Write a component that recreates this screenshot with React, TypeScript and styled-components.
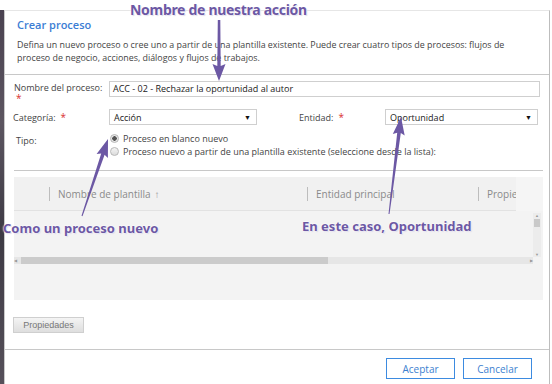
import React from "react";
import styled, { createGlobalStyle } from "styled-components";

const GlobalStyle = createGlobalStyle`
  html, body { margin: 0; padding: 0; background: #fff; }
  body { font-family: "Open Sans", "Noto Sans", sans-serif; }
  * { box-sizing: border-box; }
`;

const Page = styled.div`
  position: relative;
  width: 552px;
  height: 384px;
  padding-top: 10px;
  display: flex;
  overflow: hidden;
  background: #fff;
`;

const LeftStrip = styled.div`
  width: 4px;
  background: linear-gradient(180deg, #4a4250 0%, #5c5560 30%, #3d3a44 60%, #56505a 100%);
`;

const Dialog = styled.div`
  width: 546px;
  display: flex;
  flex-direction: column;
  border-left: 1px solid #c9c9c9;
  border-right: 1px solid #bdbdbd;
  border-top: 1px solid #e6e6e6;
  background: #fff;
  color: #444;
  font-size: 9px;
`;

const Header = styled.div`
  height: 64px;
  padding: 6px 12px 0 12px;
  border-bottom: 1px solid #c8c8c8;
`;

const Title = styled.div`
  color: #3b7dd4;
  font-size: 11px;
  font-weight: 600;
  line-height: 16px;
`;

const Desc = styled.div`
  margin-top: 5px;
  font-size: 8.9px;
  line-height: 13px;
  color: #444;
`;

const Body = styled.div`
  flex: 1;
  display: flex;
  flex-direction: column;
  padding: 6px 7px 0 8px;
  border-bottom: 1px solid #c8c8c8;
`;

const Row = styled.div<{ $h: number; $mt?: number }>`
  display: flex;
  align-items: flex-start;
  height: ${(p) => p.$h}px;
  margin-top: ${(p) => p.$mt ?? 0}px;
`;

const Label = styled.div<{ $w: number; $pl?: number; $pt?: number }>`
  width: ${(p) => p.$w}px;
  padding-left: ${(p) => p.$pl ?? 0}px;
  padding-top: ${(p) => p.$pt ?? 0}px;
  font-size: 9px;
  line-height: 11px;
  color: #444;
`;

const Req = styled.span`
  color: #d9302f;
  font-size: 10px;
  margin-left: 5px;
`;

const ReqBelow = styled.div`
  color: #d9302f;
  font-size: 10px;
  line-height: 8px;
  height: 8px;
  margin-top: 1px;
  padding-left: 2px;
`;

const TextInput = styled.div`
  width: 431px;
  height: 16px;
  border: 1px solid #cfcfcf;
  padding-left: 3px;
  font-size: 9px;
  line-height: 14px;
  color: #222;
`;

const Select = styled.div<{ $w: number }>`
  width: ${(p) => p.$w}px;
  height: 16px;
  border: 1px solid #cfcfcf;
  padding: 0 5px 0 4px;
  display: flex;
  align-items: center;
  justify-content: space-between;
  font-size: 9px;
  color: #222;
`;

const Caret = styled.span`
  font-size: 7px;
  color: #111;
`;

const RadioGroup = styled.div`
  display: flex;
  flex-direction: column;
  gap: 1px;
  padding-top: 3px;
`;

const RadioItem = styled.div`
  display: flex;
  align-items: center;
  gap: 4px;
  height: 12px;
  font-size: 9px;
  color: #444;
`;

const RadioDot = styled.span<{ $on?: boolean }>`
  width: 9px;
  height: 9px;
  border-radius: 50%;
  border: 1px solid #b8b8b8;
  background: ${(p) => (p.$on ? "radial-gradient(circle, #555 0 2px, #e8e8e8 2.5px)" : "linear-gradient(#f4f4f4,#dcdcdc)")};
`;

const Divider = styled.div`
  height: 1px;
  background: #c8c8c8;
  margin: 0 0 0 1px;
  width: 529px;
`;

const Grid = styled.div`
  margin: 6px 0 0 1px;
  width: 529px;
  height: 123px;
  background: #f3f3f3;
  display: flex;
  flex-direction: column;
`;

const GridHead = styled.div`
  height: 34px;
  display: flex;
  align-items: center;
  border-bottom: 1px solid #e2e2e2;
  background: #f1f1f1;
`;

const HeadCell = styled.div<{ $w: number }>`
  width: ${(p) => p.$w}px;
  height: 34px;
  display: flex;
  align-items: center;
  color: #8a8a8a;
  font-size: 10px;
  overflow: hidden;
  white-space: nowrap;
`;

const Sep = styled.span`
  width: 1px;
  height: 14px;
  background: #bdbdbd;
  margin-right: 8px;
  flex: none;
`;

const SortArrow = styled.span`
  margin-left: 4px;
  font-size: 10px;
  font-weight: 700;
  color: #999;
`;

const HeadTail = styled.div`
  flex: 1;
  height: 34px;
  background: #f5f5f5;
`;

const GridBody = styled.div`
  height: 53px;
  display: flex;
  flex-direction: column;
`;

const GridMain = styled.div`
  flex: 1;
  display: flex;
  justify-content: flex-end;
`;

const VScroll = styled.div`
  width: 8px;
  margin-right: 2px;
  margin-top: 2px;
  display: flex;
  flex-direction: column;
  align-items: center;
  background: #ececec;
  color: #999;
  font-size: 4px;
`;

const VThumb = styled.div`
  width: 6px;
  height: 8px;
  background: #c9c9c9;
  margin-top: 1px;
`;

const Filler = styled.span`
  flex: 1;
`;

const HScroll = styled.div`
  height: 7px;
  display: flex;
  align-items: center;
  background: #e6e6e6;
  margin-right: 10px;
  color: #999;
  font-size: 4px;
`;

const HThumb = styled.div`
  width: 307px;
  height: 7px;
  margin-left: 4px;
  background: #cbcbcb;
`;

const GreyButton = styled.div`
  margin: 17px 0 0 0;
  width: 71px;
  height: 16px;
  border: 1px solid #cfcfcf;
  background: linear-gradient(#f4f4f4, #dedede);
  color: #777;
  font-family: "Liberation Sans", Arial, sans-serif;
  font-size: 9px;
  display: flex;
  align-items: center;
  justify-content: center;
`;

const Footer = styled.div`
  height: 34px;
  display: flex;
  justify-content: flex-end;
  align-items: flex-start;
  gap: 8px;
  padding: 8px 17px 0 0;
`;

const BlueButton = styled.div`
  width: 69px;
  height: 21px;
  border: 1px solid #3d8be0;
  color: #3d7fd0;
  font-size: 10px;
  display: flex;
  align-items: center;
  justify-content: center;
`;

const Note = styled.div<{ $x: number; $y: number; $size: number; $ls?: number }>`
  position: absolute;
  left: ${(p) => p.$x}px;
  top: ${(p) => p.$y}px;
  font-family: "Noto Sans", "Open Sans", sans-serif;
  font-weight: 700;
  font-size: ${(p) => p.$size}px;
  letter-spacing: ${(p) => p.$ls ?? 0}px;
  line-height: 1;
  color: #6c58a4;
  white-space: nowrap;
  text-shadow: 0 0 2px #fff, 0 0 2px #fff, 1px 1px 1px #d8d3e6;
`;

const Overlay = styled.svg`
  position: absolute;
  left: 0;
  top: 0;
  pointer-events: none;
`;

function arrowPoints(x1: number, y1: number, x2: number, y2: number, tail = 1, shaft = 3.4, headW = 12, headL = 16) {
  const dx = x2 - x1;
  const dy = y2 - y1;
  const len = Math.hypot(dx, dy);
  const ux = dx / len;
  const uy = dy / len;
  const nx = -uy;
  const ny = ux;
  const bx = x2 - ux * headL;
  const by = y2 - uy * headL;
  const p = (x: number, y: number) => `${x.toFixed(1)},${y.toFixed(1)}`;
  return [
    p(x1 + (nx * tail) / 2, y1 + (ny * tail) / 2),
    p(bx + (nx * shaft) / 2, by + (ny * shaft) / 2),
    p(bx + (nx * headW) / 2 - ux * 2, by + (ny * headW) / 2 - uy * 2),
    p(x2, y2),
    p(bx - (nx * headW) / 2 - ux * 2, by - (ny * headW) / 2 - uy * 2),
    p(bx - (nx * shaft) / 2, by - (ny * shaft) / 2),
    p(x1 - (nx * tail) / 2, y1 - (ny * tail) / 2),
  ].join(" ");
}

export default function App() {
  return (
    <>
      <GlobalStyle />
      <Page>
        <LeftStrip />
        <Dialog>
          <Header>
            <Title>Crear proceso</Title>
            <Desc>
              Defina un nuevo proceso o cree uno a partir de una plantilla existente. Puede crear cuatro tipos de procesos: flujos de
              <br />
              proceso de negocio, acciones, diálogos y flujos de trabajos.
            </Desc>
          </Header>
          <Body>
            <Row $h={24}>
              <Label $w={96} $pl={1} $pt={1}>
                Nombre del proceso:
                <ReqBelow>*</ReqBelow>
              </Label>
              <TextInput>ACC - 02 - Rechazar la oportunidad al autor</TextInput>
            </Row>
            <Row $h={20} $mt={4}>
              <Label $w={96} $pt={3}>
                Categoría:<Req>*</Req>
              </Label>
              <Select $w={148}>
                Acción<Caret>▼</Caret>
              </Select>
              <Label $w={128} $pl={42} $pt={3}>
                Entidad:<Req>*</Req>
              </Label>
              <Select $w={153}>
                Oportunidad<Caret>▼</Caret>
              </Select>
            </Row>
            <Row $h={41}>
              <Label $w={97} $pl={3} $pt={6}>
                Tipo:
              </Label>
              <RadioGroup>
                <RadioItem>
                  <RadioDot $on />
                  Proceso en blanco nuevo
                </RadioItem>
                <RadioItem>
                  <RadioDot />
                  Proceso nuevo a partir de una plantilla existente (seleccione desde la lista):
                </RadioItem>
              </RadioGroup>
            </Row>
            <Divider />
            <Grid>
              <GridHead>
                <HeadCell $w={35} />
                <HeadCell $w={258}>
                  <Sep />
                  Nombre de plantilla<SortArrow>↑</SortArrow>
                </HeadCell>
                <HeadCell $w={171}>
                  <Sep />
                  Entidad principal
                </HeadCell>
                <HeadCell $w={38}>
                  <Sep />
                  Propie
                </HeadCell>
                <HeadTail />
              </GridHead>
              <GridBody>
                <GridMain>
                  <VScroll>
                    ▲<VThumb />
                    <Filler />▼
                  </VScroll>
                </GridMain>
                <HScroll>
                  ◀<HThumb />
                  <Filler />▶
                </HScroll>
              </GridBody>
            </Grid>
            <GreyButton>Propiedades</GreyButton>
          </Body>
          <Footer>
            <BlueButton>Aceptar</BlueButton>
            <BlueButton>Cancelar</BlueButton>
          </Footer>
        </Dialog>
        <Overlay width={552} height={384} viewBox="0 0 552 384">
          <polygon points={arrowPoints(219, 20, 219, 81, 2.5, 3.4, 13, 15)} fill="#6c58a4" />
          <polygon points={arrowPoints(82, 216, 108, 139, 1, 3.6, 12, 16)} fill="#6c58a4" />
          <polygon points={arrowPoints(389, 214, 401, 117, 1, 3.6, 12, 16)} fill="#6c58a4" />
        </Overlay>
        <Note $x={130} $y={3} $size={14} $ls={-0.3}>Nombre de nuestra acción</Note>
        <Note $x={3} $y={222} $size={13}>Como un proceso nuevo</Note>
        <Note $x={302} $y={220} $size={13}>En este caso, Oportunidad</Note>
      </Page>
    </>
  );
}
